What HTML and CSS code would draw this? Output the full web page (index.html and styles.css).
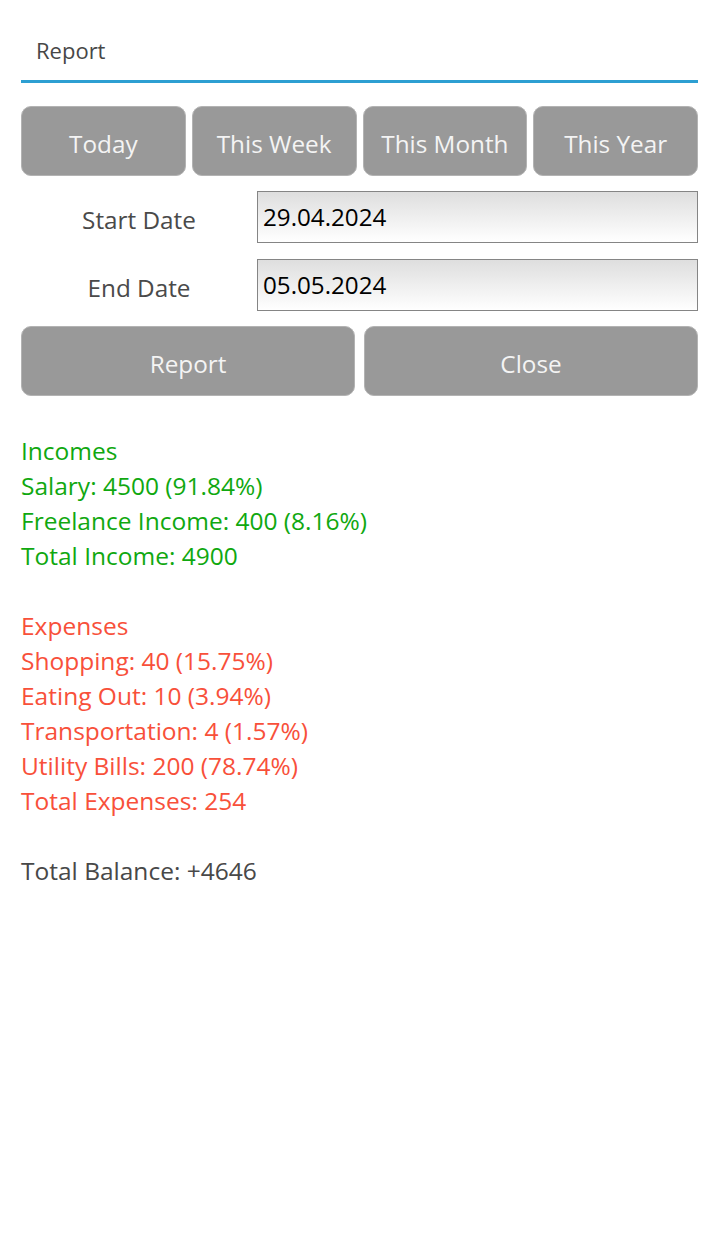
FILE: index.html
```html
<!DOCTYPE html>
<html>
<head>
<meta charset="utf-8">
<link rel="stylesheet" href="styles.css">
</head>
<body>
<div class="page">
  <div class="tab">
    <span class="tab-title">Report</span>
  </div>
  <div class="range-row">
    <button class="btn">Today</button>
    <button class="btn">This Week</button>
    <button class="btn">This Month</button>
    <button class="btn">This Year</button>
  </div>
  <div class="date-row">
    <div class="date-label">Start Date</div>
    <div class="date-input">29.04.2024</div>
  </div>
  <div class="date-row">
    <div class="date-label">End Date</div>
    <div class="date-input">05.05.2024</div>
  </div>
  <div class="action-row">
    <button class="btn">Report</button>
    <button class="btn">Close</button>
  </div>
  <div class="report">
    <div class="income">Incomes</div>
    <div class="income">Salary: 4500 (91.84%)</div>
    <div class="income">Freelance Income: 400 (8.16%)</div>
    <div class="income">Total Income: 4900</div>
    <div class="blank"></div>
    <div class="expense">Expenses</div>
    <div class="expense">Shopping: 40 (15.75%)</div>
    <div class="expense">Eating Out: 10 (3.94%)</div>
    <div class="expense">Transportation: 4 (1.57%)</div>
    <div class="expense">Utility Bills: 200 (78.74%)</div>
    <div class="expense">Total Expenses: 254</div>
    <div class="blank"></div>
    <div class="balance">Total Balance: +4646</div>
  </div>
</div>
</body>
</html>
```
FILE: styles.css
```css
* { box-sizing: border-box; }
html, body {
  margin: 0;
  padding: 0;
  background: #ffffff;
}
body {
  font-family: "Open Sans", "Noto Sans", sans-serif;
  width: 720px;
  height: 1260px;
}
.page {
  padding: 0 22px 0 21px;
}
.tab {
  height: 83px;
  border-bottom: 3px solid #2d9fd2;
  padding: 35px 0 0 15px;
}
.tab-title {
  font-size: 22px;
  line-height: 30px;
  color: #474747;
  display: block;
}
.range-row {
  display: flex;
  gap: 6px;
  margin-top: 23px;
}
.btn {
  flex: 1;
  height: 70px;
  background: #999999;
  border: 1px solid #b3b3b3;
  border-radius: 10px;
  color: #f4f4f4;
  font-family: "Open Sans", "Noto Sans", sans-serif;
  font-size: 24.3px;
  padding: 4px 0 0 0;
  margin: 0;
}
.date-row {
  display: flex;
  align-items: center;
  margin-top: 15px;
}
.date-row + .date-row {
  margin-top: 16px;
}
.date-label {
  width: 236px;
  text-align: center;
  font-size: 24.3px;
  color: #4a4a4a;
  padding-top: 4px;
}
.date-input {
  flex: 1;
  height: 52px;
  border: 1px solid #858585;
  background: linear-gradient(#dedede, #ffffff);
  font-size: 24.2px;
  color: #000000;
  padding: 8px 0 0 5px;
  line-height: 34px;
}
.action-row {
  display: flex;
  gap: 9px;
  margin-top: 15px;
}
.report {
  margin-top: 37px;
  font-size: 24.5px;
  line-height: 35px;
}
.income { color: #10a810; }
.expense { color: #f8503a; }
.balance { color: #484848; }
.blank { height: 35px; }
```
